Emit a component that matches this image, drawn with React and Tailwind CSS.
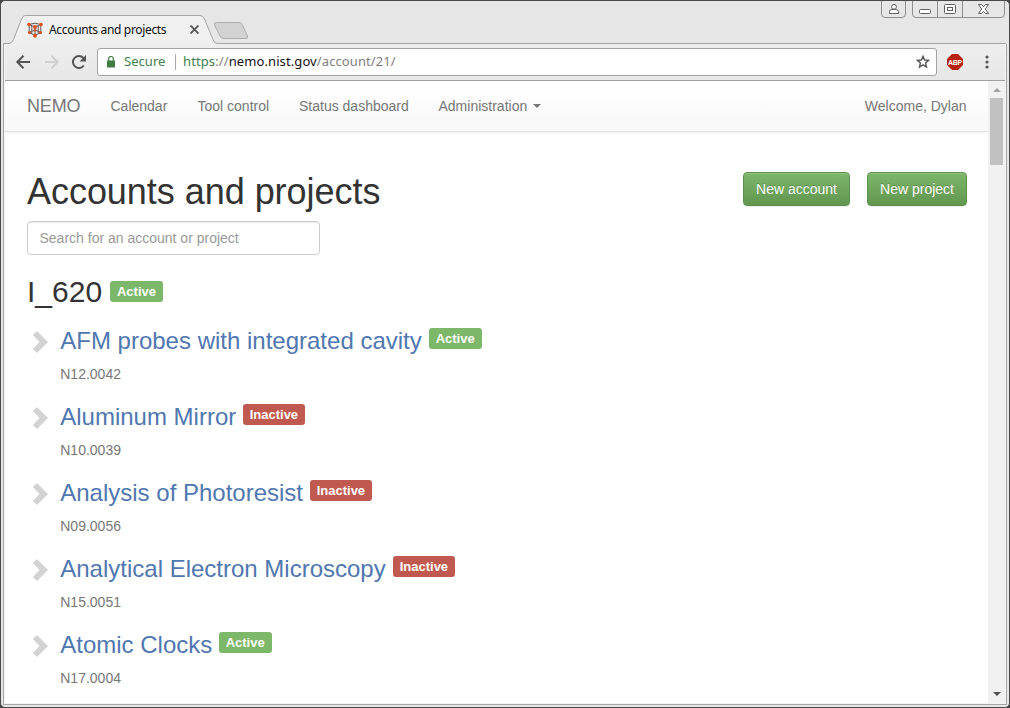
const projects = [
  { name: 'AFM probes with integrated cavity', code: 'N12.0042', active: true, width: 'w-[362px]' },
  { name: 'Aluminum Mirror', code: 'N10.0039', active: false, width: 'w-[176px]' },
  { name: 'Analysis of Photoresist', code: 'N09.0056', active: false, width: 'w-[243px]' },
  { name: 'Analytical Electron Microscopy', code: 'N15.0051', active: false, width: 'w-[326px]' },
  { name: 'Atomic Clocks', code: 'N17.0004', active: true, width: 'w-[152px]' },
];

function Badge({ active }) {
  return (
    <span
      className={
        'flex h-[21px] items-center justify-center rounded-[3px] text-[13px] leading-none font-bold text-white ' +
        (active ? 'w-[53px] bg-[#7db76a]' : 'w-[62.500px] bg-[#c05a50]')
      }
    >
      {active ? 'Active' : 'Inactive'}
    </span>
  );
}

function Favicon() {
  return (
    <svg width="16" height="16" viewBox="0 0 16 16" fill="none">
      <path d="M2.200 2.500 8 1.200 13.800 2.500 M2.200 2.500 8 5 13.800 2.500 M2.200 2.500V10.500L8 13.500 13.800 10.500V2.500 M8 5V13.500 M2.200 10.500 8 8 13.800 10.500 M4.800 4V11.500 M11.200 4V11.500" stroke="#5f5a5a" strokeWidth="1" />
      <g fill="#dc5220">
        <circle cx="2" cy="2.500" r="1.800" /><circle cx="14" cy="2.500" r="1.800" />
        <circle cx="8" cy="5" r="2" /><circle cx="8" cy="8.500" r="1.200" />
        <circle cx="2.500" cy="10.600" r="1.600" /><circle cx="13.500" cy="10.600" r="1.600" />
        <circle cx="8" cy="13.700" r="2" />
      </g>
    </svg>
  );
}

function TitleBar() {
  return (
    <div className="relative h-[43px] w-full shrink-0">
      <svg className="absolute top-0 left-0" width="1008" height="43" viewBox="1 1 1008 43" fill="none">
        <path d="M10.5 44 L11 43 Q13 42 14 39 L21.5 19 Q23 15.500 25 15.500 H200 Q203 15.500 204.500 19 L213 39 Q215 43.500 217 43.500 V45 H10Z" fill="#f0f0f0" />
        <path d="M3 43.500 H9 Q12 43.500 13.500 39.500 L21.500 19 Q23 15.500 25 15.500 H200 Q203 15.500 204.500 19 L213 39.500 Q214.500 43.500 217 43.500 H1006" stroke="#a5a5a5" />
        <path d="M216.500 22.500 H239 Q241.500 22.500 242.500 25 L247.500 36 Q248.500 38.500 246 38.500 H224 Q221 38.500 220 36 L214.500 25 Q213.500 22.500 216.500 22.500Z" fill="#d2d2d2" stroke="#adadad" />
        <path d="M881.500 1 V14 Q881.500 17.500 885 17.500 H902 Q905.500 17.500 905.500 14 V1 M912.500 1 V14 Q912.500 17.500 916 17.500 H1001 Q1004.500 17.500 1004.500 14 V1 M937.500 1 V17 M962.500 1 V17" stroke="#8f8f8f" />
        <g stroke="#606060">
          <path d="M889.500 13.500 V11.500 Q889.500 9.500 892 9.500 H895.500 Q898.500 9.500 898.500 11.500 V13.500Z" fill="#fff" />
          <circle cx="894" cy="6.800" r="2.400" fill="#fff" />
          <rect x="919.500" y="9.500" width="11" height="4" rx="1" fill="#fff" />
          <rect x="944.500" y="4.500" width="11" height="9" rx="1" fill="#fff" />
          <rect x="947.500" y="7.500" width="5" height="3" fill="#fff" />
          <path d="M978.500 4.500 H981.500 L983.500 6.700 L985.500 4.500 H988.500 L985.300 9 L988.500 13.500 H985.500 L983.500 11.300 L981.500 13.500 H978.500 L981.700 9Z" fill="#fff" />
        </g>
      </svg>
      <div className="relative flex h-full items-center pt-[14px] pl-[26px] font-['Noto_Sans','Open_Sans',sans-serif]">
        <Favicon />
        <span className="ml-[6px] w-[140.500px] text-[12px] tracking-[-0.33px] whitespace-nowrap text-[#111]">Accounts and projects</span>
        <svg width="9" height="9" viewBox="0 0 8 8"><path d="M.5.5l7 7M7.500.5l-7 7" stroke="#555" strokeWidth="1.600" /></svg>
      </div>
    </div>
  );
}

function Toolbar() {
  return (
    <div className="flex h-[37px] shrink-0 items-center border-b border-[#a0a0a0] bg-gradient-to-b from-[#eeeeee] to-[#e7e7e7] font-['Noto_Sans','Open_Sans',sans-serif]">
      <svg className="ml-[10px]" width="16" height="16" viewBox="0 0 16 16" fill="none" stroke="#555" strokeWidth="2"><path d="M15 8H2.500M8.500 1.800 2.300 8l6.200 6.200" /></svg>
      <svg className="ml-[13px]" width="16" height="16" viewBox="0 0 16 16" fill="none" stroke="#cfcfcf" strokeWidth="2"><path d="M1 8h12.500M7.500 1.800 13.700 8l-6.200 6.200" /></svg>
      <svg className="ml-[11px]" width="16" height="16" viewBox="0 0 16 16"><path d="M12.800 11.500a6 6 0 1 1-.4-7.500" fill="none" stroke="#555" strokeWidth="2" /><path d="M15 1v6.500H8.500Z" fill="#555" /></svg>
      <div className="ml-[10px] flex h-[28px] w-[840px] items-center rounded-[3px] border border-[#a3a3a3] bg-white text-[13px]">
        <svg className="ml-[9px]" width="8" height="12" viewBox="0 0 8 12"><path d="M0 4.500h8V11.500H0Z" fill="#3f7d44" /><path d="M1.700 5V2.800a2.300 2.300 0 0 1 4.600 0V5" fill="none" stroke="#3f7d44" strokeWidth="1.200" /></svg>
        <span className="ml-[9px] w-[51px] tracking-[0.05px] text-[#41804a]">Secure</span>
        <span className="h-[16px] w-px bg-[#aaa]" />
        <span className="ml-[7px] tracking-[0.1px] whitespace-nowrap text-[#808080]">
          <span className="text-[#41804a]">https</span>://<span className="text-[#111]">nemo.nist.gov</span>/account/21/
        </span>
        <svg className="mr-[6px] ml-auto" width="14" height="14" viewBox="0 0 14 14"><path d="M7 1.300 8.600 5l4 .3-3 2.700.9 4L7 9.900 3.500 12l.9-4-3-2.700 4-.3Z" fill="none" stroke="#555" strokeWidth="1.400" /></svg>
      </div>
      <div className="relative ml-[10px] flex size-[16px] items-center justify-center">
        <svg className="absolute inset-0" width="16" height="16" viewBox="0 0 16 16"><path d="M5 0h6l5 5v6l-5 5H5l-5-5V5Z" fill="#b7210d" /></svg>
        <span className="relative font-['Liberation_Sans',sans-serif] text-[7px] leading-none font-bold tracking-[-0.2px] text-white">ABP</span>
      </div>
      <svg className="ml-[22px]" width="4" height="14" viewBox="0 0 4 14" fill="#555"><circle cx="2" cy="2" r="1.600" /><circle cx="2" cy="7" r="1.600" /><circle cx="2" cy="12" r="1.600" /></svg>
    </div>
  );
}

function Navbar() {
  return (
    <nav className="flex h-[51px] items-center border-b border-[#e4e4e4] bg-gradient-to-b from-white to-[#f8f8f8] pr-[21.500px] pl-[22px] text-[14px] whitespace-nowrap text-[#777] shadow-[0_1px_4px_rgba(0,0,0,0.07)]">
      <span className="w-[83.500px] text-[18px] tracking-[-0.15px]">NEMO</span>
      <span className="w-[87px]">Calendar</span>
      <span className="w-[101.500px]">Tool control</span>
      <span className="w-[139.500px]">Status dashboard</span>
      <span>Administration</span>
      <svg className="ml-[6px]" width="8" height="4" viewBox="0 0 8 4"><path d="M0 0h8L4 4Z" fill="#777" /></svg>
      <span className="ml-auto">Welcome, Dylan</span>
    </nav>
  );
}

function GreenButton({ children, className }) {
  return (
    <button className={'h-[34px] rounded-[4px] border border-[#5d8f4d] bg-gradient-to-b from-[#7db76a] to-[#62964f] text-[14px] whitespace-nowrap text-white shadow-[inset_0_1px_0_rgba(255,255,255,0.15),0_1px_1px_rgba(0,0,0,0.075)] [text-shadow:0_-1px_0_rgba(0,0,0,0.2)] ' + className}>
      {children}
    </button>
  );
}

function Project({ project }) {
  return (
    <li className="flex h-[76px] items-start">
      <svg className="mt-[3px] ml-[5px] shrink-0" width="17" height="22" viewBox="0 0 17 22"><path d="M5 0 16 11 5 22 .8 18 7.500 11 .8 4Z" fill="#d3d3d3" /></svg>
      <div className="ml-[11.250px]">
        <div className="flex h-[26px] items-start">
          <h3 className={'text-[24px] leading-[26px] whitespace-nowrap text-[#5077b0] ' + project.width}>{project.name}</h3>
          <span className="ml-[6.400px]"><Badge active={project.active} /></span>
        </div>
        <p className="mt-[10px] text-[14px] leading-[20px] text-[#777]">{project.code}</p>
      </div>
    </li>
  );
}

function Scrollbar() {
  return (
    <div className="flex w-[17px] shrink-0 flex-col items-center bg-[#f1f1f1] pt-[7px] pb-[7px]">
      <svg width="8" height="4" viewBox="0 0 8 4"><path d="M0 4h8L4 0Z" fill="#a3a3a3" /></svg>
      <div className="mt-[6px] h-[67px] w-[13px] bg-[#c1c1c1]" />
      <svg className="mt-auto" width="8" height="4" viewBox="0 0 8 4"><path d="M0 0h8L4 4Z" fill="#505050" /></svg>
    </div>
  );
}

export default function App() {
  return (
    <div className="h-[708px] w-[1010px] overflow-hidden bg-[#444]">
      <div className="flex h-full w-full flex-col overflow-hidden rounded-[5px] border border-[#4a4a4a] bg-[#e6e6e6]">
        <TitleBar />
        <div className="mx-[2px] mb-[2px] flex min-h-0 flex-1 flex-col border-r border-b border-l border-[#a5a5a5] bg-[#f4f4f4] px-px pb-px">
          <Toolbar />
          <div className="flex min-h-0 flex-1 font-['Liberation_Sans',Arial,sans-serif]">
            <main className="min-w-0 flex-1 overflow-hidden bg-white">
              <Navbar />
              <div className="pr-[21px] pl-[22px]">
                <header className="flex h-[80px] items-end">
                  <h1 className="text-[36px] leading-[40px] tracking-[-0.04px] whitespace-nowrap text-[#333]">Accounts and projects</h1>
                  <div className="ml-auto flex gap-[17px] pb-[6px]">
                    <GreenButton className="w-[107px]">New account</GreenButton>
                    <GreenButton className="w-[100px]">New project</GreenButton>
                  </div>
                </header>
                <input
                  className="mt-[9px] block h-[34px] w-[293px] rounded-[4px] border border-[#ccc] px-[11.500px] text-[14px] shadow-[inset_0_1px_1px_rgba(0,0,0,0.075)] placeholder:text-[#999]"
                  placeholder="Search for an account or project"
                />
                <div className="mt-[20px] flex h-[33px] items-start">
                  <h2 className="w-[83px] text-[30px] leading-[33px] text-[#333]">I_620</h2>
                  <span className="mt-[6px]"><Badge active /></span>
                </div>
                <ul className="mt-[20px]">
                  {projects.map((project) => (
                    <Project key={project.code} project={project} />
                  ))}
                </ul>
              </div>
            </main>
            <Scrollbar />
          </div>
        </div>
      </div>
    </div>
  );
}
